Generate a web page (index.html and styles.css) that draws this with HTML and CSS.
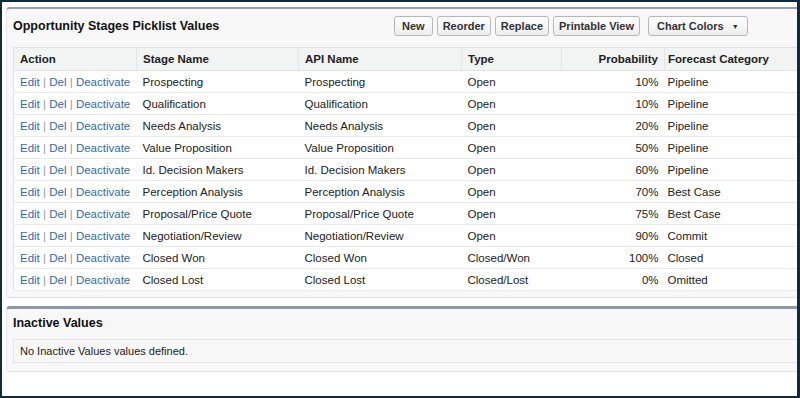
FILE: index.html
```html
<!DOCTYPE html>
<html lang="en">
<head>
  <meta charset="UTF-8">
  <meta name="viewport" content="width=device-width, initial-scale=1.0">
  <title>Opportunity Stages Picklist Values</title>
  <link rel="stylesheet" href="styles.css">
</head>
<body>
  <div class="frame">
    <div class="panel">
      <div class="panel-head">
        <h2>Opportunity Stages Picklist Values</h2>
        <div class="buttons">
          <button class="btn btn-new">New</button>
          <button class="btn">Reorder</button>
          <button class="btn">Replace</button>
          <button class="btn">Printable View</button>
          <button class="btn btn-menu">Chart Colors <span class="caret">&#9660;</span></button>
        </div>
      </div>

      <table class="list">
        <thead>
          <tr>
            <th class="c-action">Action</th>
            <th class="c-stage">Stage Name</th>
            <th class="c-api">API Name</th>
            <th class="c-type">Type</th>
            <th class="c-prob">Probability</th>
            <th class="c-cat">Forecast Category</th>
          </tr>
        </thead>
        <tbody>
          <tr>
            <td class="actions"><a href="#">Edit</a> <span class="sep">|</span> <a href="#">Del</a> <span class="sep">|</span> <a href="#">Deactivate</a></td>
            <td>Prospecting</td><td>Prospecting</td><td>Open</td><td class="num">10%</td><td class="cat">Pipeline</td>
          </tr>
          <tr>
            <td class="actions"><a href="#">Edit</a> <span class="sep">|</span> <a href="#">Del</a> <span class="sep">|</span> <a href="#">Deactivate</a></td>
            <td>Qualification</td><td>Qualification</td><td>Open</td><td class="num">10%</td><td class="cat">Pipeline</td>
          </tr>
          <tr>
            <td class="actions"><a href="#">Edit</a> <span class="sep">|</span> <a href="#">Del</a> <span class="sep">|</span> <a href="#">Deactivate</a></td>
            <td>Needs Analysis</td><td>Needs Analysis</td><td>Open</td><td class="num">20%</td><td class="cat">Pipeline</td>
          </tr>
          <tr>
            <td class="actions"><a href="#">Edit</a> <span class="sep">|</span> <a href="#">Del</a> <span class="sep">|</span> <a href="#">Deactivate</a></td>
            <td>Value Proposition</td><td>Value Proposition</td><td>Open</td><td class="num">50%</td><td class="cat">Pipeline</td>
          </tr>
          <tr>
            <td class="actions"><a href="#">Edit</a> <span class="sep">|</span> <a href="#">Del</a> <span class="sep">|</span> <a href="#">Deactivate</a></td>
            <td>Id. Decision Makers</td><td>Id. Decision Makers</td><td>Open</td><td class="num">60%</td><td class="cat">Pipeline</td>
          </tr>
          <tr>
            <td class="actions"><a href="#">Edit</a> <span class="sep">|</span> <a href="#">Del</a> <span class="sep">|</span> <a href="#">Deactivate</a></td>
            <td>Perception Analysis</td><td>Perception Analysis</td><td>Open</td><td class="num">70%</td><td class="cat">Best Case</td>
          </tr>
          <tr>
            <td class="actions"><a href="#">Edit</a> <span class="sep">|</span> <a href="#">Del</a> <span class="sep">|</span> <a href="#">Deactivate</a></td>
            <td>Proposal/Price Quote</td><td>Proposal/Price Quote</td><td>Open</td><td class="num">75%</td><td class="cat">Best Case</td>
          </tr>
          <tr>
            <td class="actions"><a href="#">Edit</a> <span class="sep">|</span> <a href="#">Del</a> <span class="sep">|</span> <a href="#">Deactivate</a></td>
            <td>Negotiation/Review</td><td>Negotiation/Review</td><td>Open</td><td class="num">90%</td><td class="cat">Commit</td>
          </tr>
          <tr>
            <td class="actions"><a href="#">Edit</a> <span class="sep">|</span> <a href="#">Del</a> <span class="sep">|</span> <a href="#">Deactivate</a></td>
            <td>Closed Won</td><td>Closed Won</td><td>Closed/Won</td><td class="num">100%</td><td class="cat">Closed</td>
          </tr>
          <tr>
            <td class="actions"><a href="#">Edit</a> <span class="sep">|</span> <a href="#">Del</a> <span class="sep">|</span> <a href="#">Deactivate</a></td>
            <td>Closed Lost</td><td>Closed Lost</td><td>Closed/Lost</td><td class="num">0%</td><td class="cat">Omitted</td>
          </tr>
        </tbody>
      </table>
    </div>

    <div class="panel panel-inactive">
      <div class="panel-head">
        <h2>Inactive Values</h2>
      </div>
      <div class="empty">No Inactive Values values defined.</div>
    </div>
  </div>
</body>
</html>
```

FILE: styles.css
```css
body {
  margin: 0;
  font-family: "Liberation Sans", Arial, sans-serif;
  font-size: 11.5px;
  color: #222;
  background: #fff;
}

.frame {
  height: 398px;
  box-sizing: border-box;
  border: 2px solid #0f2b3c;
  border-right-width: 3px;
  background: #fff;
  overflow: hidden;
  padding: 5px 0 0 4px;
}

.panel {
  margin-right: -12px;
  background: #f8f8f8;
  border: 1px solid #e3e3e3;
  border-top: 2px solid #98a1b3;
  border-radius: 4px;
  padding: 0 0 6px 6px;
}

.panel-head {
  display: flex;
  align-items: flex-start;
  height: 38px;
}

.panel-head h2 {
  flex: 0 0 381px;
  margin: 0;
  padding-top: 10px;
  font-size: 12.5px;
  line-height: 14px;
  font-weight: bold;
  color: #111;
}

.buttons {
  display: flex;
  align-items: center;
  margin-top: 7px;
}

.btn {
  font-family: "Liberation Sans", Arial, sans-serif;
  font-size: 11px;
  font-weight: bold;
  color: #333;
  height: 20px;
  padding: 0 5px;
  margin-right: 4px;
  background: linear-gradient(#ffffff, #ededed);
  border: 1px solid #b8b8b8;
  border-radius: 3px;
}

.btn-new {
  padding: 0 7px;
}

.btn-menu {
  margin-left: 4px;
  padding: 0 8px 0 8px;
}

.caret {
  font-size: 7px;
  margin-left: 5px;
  position: relative;
  top: -1px;
}

.list {
  border-collapse: collapse;
  width: 790px;
  background: #fff;
  border: 1px solid #e0e3e5;
}

.list th {
  text-align: left;
  font-weight: bold;
  font-size: 11.5px;
  color: #222;
  background: #f2f3f3;
  height: 22px;
  padding: 0 6px;
  border-bottom: 1px solid #e0e3e5;
  border-right: 1px solid #e3e5e7;
}

.list td {
  height: 21px;
  padding: 0 6px;
  border-bottom: 1px solid #e8eaeb;
  white-space: nowrap;
}

.c-action { width: 110px; }
.c-stage { width: 149px; }
.c-api { width: 150px; }
.c-type { width: 87px; }
.c-prob { width: 90px; }

.list th.c-prob,
.list td.num {
  text-align: right;
}

.list th.c-cat,
.list td.cat {
  padding-left: 3px;
}

.actions a {
  color: #2f6cb5;
  text-decoration: none;
}

.actions .sep {
  color: #999;
}

.panel-inactive {
  margin-top: 8px;
  border-top: 3px solid #8f98ab;
  padding-bottom: 8px;
}

.panel-inactive .panel-head {
  height: 30px;
}

.panel-inactive .panel-head h2 {
  padding-top: 7px;
}

.empty {
  height: 22px;
  line-height: 22px;
  padding-left: 6px;
  border: 1px solid #e3e6e6;
  border-width: 1px 0 1px 1px;
  font-size: 11px;
  color: #222;
}
```
